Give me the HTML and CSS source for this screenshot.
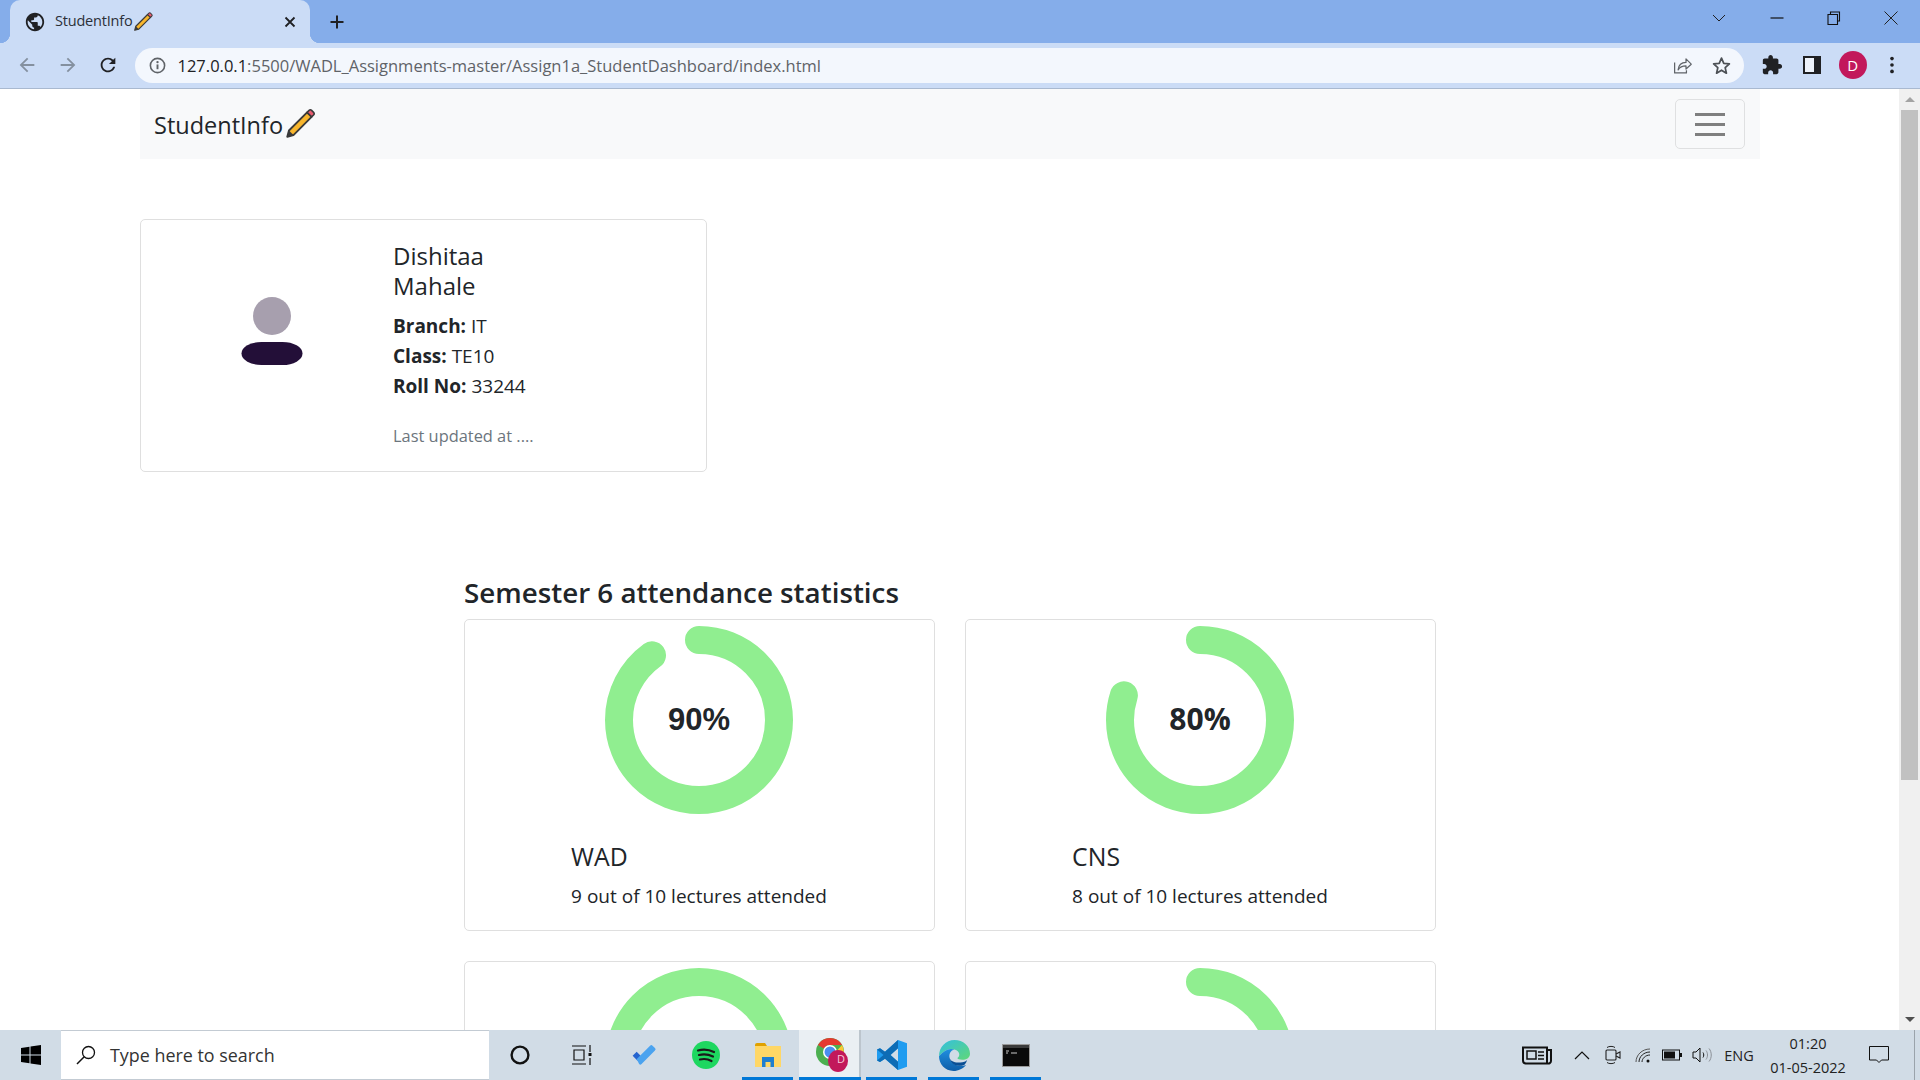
FILE: index.html
```html
<!DOCTYPE html>
<html>
<head>
    <title>StudentInfo</title>
    <link rel="stylesheet" href="styles.css">
</head>
<body>
    <svg class="defs" width="0" height="0">
        <symbol id="pencil" viewBox="0 0 24 24">
            <path d="M3 21l1.200-4.400L17 3.800l3.200 3.200L7.400 19.800z" fill="#f8b62d" stroke="#3a3a3a" stroke-width="1.300" stroke-linejoin="round"/>
            <path d="M17 3.800l1.400-1.400c.6-.6 1.200-.6 1.800 0l1.400 1.400c.6.6.6 1.200 0 1.800L20.200 7z" fill="#ea5b6f" stroke="#3a3a3a" stroke-width="1.100"/>
            <path d="M3 21l1.200-4.400 3.200 3.200z" fill="#3a3a3a"/>
        </symbol>
    </svg>

    <div class="tabstrip">
        <div class="tab">
            <svg class="tab-favicon" viewBox="0 0 24 24"><path d="M12 2C6.480 2 2 6.480 2 12s4.480 10 10 10 10-4.480 10-10S17.520 2 12 2zm-1 17.930c-3.950-.49-7-3.850-7-7.930 0-.62.08-1.210.21-1.790L9 15v1c0 1.100.9 2 2 2v1.930zm6.900-2.540c-.26-.81-1-1.390-1.900-1.390h-1v-3c0-.55-.45-1-1-1H8v-2h2c.55 0 1-.45 1-1V7h2c1.100 0 2-.9 2-2v-.41c2.930 1.190 5 4.060 5 7.410 0 2.080-.8 3.970-2.100 5.390z" fill="#202124"/></svg>
            <span class="tab-title">StudentInfo</span>
            <svg class="tab-pencil"><use href="#pencil"/></svg>
            <svg class="tab-close" viewBox="0 0 12 12"><path d="M1.500 1.500l9 9M10.500 1.500l-9 9" stroke="#202124" stroke-width="1.800" fill="none"/></svg>
        </div>
        <div class="new-tab">
            <svg viewBox="0 0 16 16"><path d="M8 1.500v13M1.500 8h13" stroke="#202124" stroke-width="2" fill="none"/></svg>
        </div>
        <div class="tab-list">
            <svg viewBox="0 0 14 8"><path d="M1 1l6 6 6-6" stroke="#202124" stroke-width="1" fill="none"/></svg>
        </div>
        <div class="win-btn">
            <svg viewBox="0 0 14 14"><path d="M0.500 7h13" stroke="#111" stroke-width="1.200" fill="none"/></svg>
        </div>
        <div class="win-btn">
            <svg viewBox="0 0 14 14"><path d="M3.500 3V1h9v9h-2M1 3.500h9.500v10H1z" stroke="#111" stroke-width="1.100" fill="none"/></svg>
        </div>
        <div class="win-btn">
            <svg viewBox="0 0 14 14"><path d="M0.500 0.500l13 13M13.500 0.500l-13 13" stroke="#222" stroke-width="1" fill="none"/></svg>
        </div>
    </div>

    <div class="toolbar">
        <div class="nav-btn">
            <svg viewBox="0 0 24 24"><path d="M20 11H7.830l5.590-5.590L12 4l-8 8 8 8 1.410-1.410L7.830 13H20v-2z" fill="#84909f"/></svg>
        </div>
        <div class="nav-btn">
            <svg viewBox="0 0 24 24"><path d="M12 4l-1.410 1.410L16.170 11H4v2h12.170l-5.580 5.590L12 20l8-8z" fill="#84909f"/></svg>
        </div>
        <div class="nav-btn">
            <svg viewBox="0 0 24 24"><path d="M17.650 6.350C16.200 4.900 14.210 4 12 4c-4.420 0-7.990 3.580-7.990 8s3.570 8 7.990 8c3.730 0 6.840-2.550 7.730-6h-2.080c-.82 2.330-3.040 4-5.650 4-3.310 0-6-2.690-6-6s2.690-6 6-6c1.660 0 3.140.69 4.220 1.780L13 11h7V4l-2.350 2.350z" fill="#202124"/></svg>
        </div>
        <div class="omnibox">
            <svg class="omni-info" viewBox="0 0 16 16">
                <circle cx="8" cy="8" r="6.700" fill="none" stroke="#5f6368" stroke-width="1.500"/>
                <path d="M8 7v4.500" stroke="#5f6368" stroke-width="1.800"/>
                <circle cx="8" cy="4.800" r="1.100" fill="#5f6368"/>
            </svg>
            <span class="omni-url"><span class="omni-host">127.0.0.1</span>:5500/WADL_Assignments-master/Assign1a_StudentDashboard/index.html</span>
            <svg class="omni-icon share" viewBox="0 0 24 24"><path d="M3 8.500v12h13.500v-3M7 17c.5-5 3.500-8.500 9-8.500V4.500l6 6-6 5.500v-3.500c-4 0-7 1-9 4.500z" fill="none" stroke="#5f6368" stroke-width="1.400" stroke-linejoin="round"/></svg>
            <svg class="omni-icon star" viewBox="0 0 24 24"><path d="M12 3.500l2.600 6 6.400.6-4.800 4.300 1.400 6.400-5.600-3.400-5.600 3.400 1.400-6.400L3 10.100l6.400-.6z" fill="none" stroke="#4d5156" stroke-width="2" stroke-linejoin="round"/></svg>
        </div>
        <div class="nav-btn">
            <svg viewBox="0 0 24 24"><path d="M20.500 11H19V7c0-1.100-.9-2-2-2h-4V3.500C13 2.120 11.880 1 10.500 1S8 2.120 8 3.500V5H4c-1.100 0-1.990.9-1.990 2v3.800H3.500c1.490 0 2.700 1.210 2.700 2.700s-1.210 2.700-2.700 2.700H2V20c0 1.100.9 2 2 2h3.800v-1.500c0-1.490 1.210-2.700 2.700-2.700 1.490 0 2.700 1.210 2.700 2.700V22H17c1.100 0 2-.9 2-2v-4h1.500c1.380 0 2.500-1.120 2.500-2.500S21.880 11 20.500 11z" fill="#202124"/></svg>
        </div>
        <div class="nav-btn">
            <svg class="panel-icon" viewBox="0 0 18 18"><rect x="0" y="0" width="18" height="18" fill="#202124"/><rect x="2" y="2" width="9" height="14" fill="#eef3fb"/></svg>
        </div>
        <div class="nav-btn"><span class="profile">D</span></div>
        <div class="nav-btn nav-btn-last">
            <svg viewBox="0 0 24 24"><circle cx="12" cy="5" r="2" fill="#202124"/><circle cx="12" cy="12" r="2" fill="#202124"/><circle cx="12" cy="19" r="2" fill="#202124"/></svg>
        </div>
    </div>

    <div class="viewport">
        <div class="page">
            <nav class="navbar">
                <div class="brand">
                    <span class="brand-name">StudentInfo</span>
                    <svg class="brand-pencil"><use href="#pencil"/></svg>
                </div>
                <button class="toggler">
                    <span class="toggler-bar"></span>
                    <span class="toggler-bar"></span>
                    <span class="toggler-bar"></span>
                </button>
            </nav>

            <section class="profile-card">
                <div class="profile-img">
                    <svg viewBox="0 0 62 68" width="62" height="68">
                        <circle cx="31" cy="19" r="19" fill="#a79fae"/>
                        <rect x="0.500" y="45" width="61" height="23" rx="20" ry="11.500" fill="#230f38"/>
                    </svg>
                </div>
                <div class="profile-body">
                    <h5 class="profile-name">Dishitaa<br>Mahale</h5>
                    <p class="profile-line"><b>Branch:</b> IT</p>
                    <p class="profile-line"><b>Class:</b> TE10</p>
                    <p class="profile-line"><b>Roll No:</b> 33244</p>
                    <p class="profile-updated">Last updated at ....</p>
                </div>
            </section>

            <section class="stats">
                <h3 class="stats-title">Semester 6 attendance statistics</h3>
                <div class="stats-grid">
                    <div class="stat-card">
                        <div class="ring">
                            <svg viewBox="0 0 188 188"><circle class="ring-arc" cx="94" cy="94" r="80" pathLength="100" stroke-dasharray="90 100"/></svg>
                            <span class="ring-value ring-value-plain">90%</span>
                        </div>
                        <div class="stat-text">
                            <h5 class="stat-name">WAD</h5>
                            <p class="stat-note">9 out of 10 lectures attended</p>
                        </div>
                    </div>
                    <div class="stat-card">
                        <div class="ring">
                            <svg viewBox="0 0 188 188"><circle class="ring-arc" cx="94" cy="94" r="80" pathLength="100" stroke-dasharray="80 100"/></svg>
                            <span class="ring-value">80%</span>
                        </div>
                        <div class="stat-text">
                            <h5 class="stat-name">CNS</h5>
                            <p class="stat-note">8 out of 10 lectures attended</p>
                        </div>
                    </div>
                    <div class="stat-card">
                        <div class="ring">
                            <svg viewBox="0 0 188 188"><circle class="ring-arc" cx="94" cy="94" r="80"/></svg>
                        </div>
                    </div>
                    <div class="stat-card">
                        <div class="ring">
                            <svg viewBox="0 0 188 188"><circle class="ring-arc" cx="94" cy="94" r="80" pathLength="100" stroke-dasharray="60 100"/></svg>
                        </div>
                    </div>
                </div>
            </section>
        </div>
        <div class="scrollbar">
            <div class="scroll-btn"><span class="arrow-up"></span></div>
            <div class="scroll-thumb"></div>
            <div class="scroll-rest"></div>
            <div class="scroll-btn"><span class="arrow-down"></span></div>
        </div>
    </div>

    <div class="taskbar">
        <div class="start">
            <svg viewBox="0 0 20 20"><path d="M0 3l8.500-1.200v7.700H0zM9.500 1.600L20 0v9.500H9.500zM0 10.500h8.500v7.700L0 17zM9.500 10.500H20V20L9.500 18.400z" fill="#000"/></svg>
        </div>
        <div class="search">
            <svg viewBox="0 0 20 20"><circle cx="12.500" cy="7.500" r="6" fill="none" stroke="#111" stroke-width="1.300"/><path d="M8.200 11.800L1 19" stroke="#111" stroke-width="1.500"/></svg>
            <span>Type here to search</span>
        </div>
        <div class="task task-small">
            <svg viewBox="0 0 20 20"><circle cx="10" cy="10" r="8.400" fill="none" stroke="#111" stroke-width="2.400"/></svg>
        </div>
        <div class="task task-small">
            <svg viewBox="0 0 20 20"><path d="M0 1h14M0 19h14M2 5h10v10H2zM18 0v7M18 13v7" fill="none" stroke="#111" stroke-width="1.200"/><rect x="16.500" y="8" width="3" height="3" fill="#111"/></svg>
        </div>
        <div class="task">
            <svg viewBox="0 0 32 26"><path d="M2 14l5-5 6 6-5 5z" fill="#2564cf"/><path d="M8 20l-1.500-1.500L23.500 1.500a2 2 0 0 1 3 0l3 3a2 2 0 0 1 0 3L13 24a2 2 0 0 1-3 0z" fill="#4ba3ef"/></svg>
        </div>
        <div class="task task-spotify">
            <svg viewBox="0 0 28 28"><circle cx="14" cy="14" r="14" fill="#1ed760"/><path d="M6 9.500c5-1.500 11-1 16 1.500M7 14c4.500-1.200 9.500-.7 14 1.500M8 18.500c4-1 8-.5 11.500 1.500" fill="none" stroke="#1a1a1a" stroke-width="2.200" stroke-linecap="round"/></svg>
        </div>
        <div class="task task-open task-folder">
            <svg viewBox="0 0 28 26"><path d="M1 3a2 2 0 0 1 2-2h8l2 3H1z" fill="#e0a100"/><rect x="1" y="4" width="26" height="21" fill="#ffd766"/><path d="M8 25V15h12v10h-3.500v-5h-5v5z" fill="#1f7fd0"/></svg>
        </div>
        <div class="task task-active">
            <svg viewBox="0 0 32 36">
                <circle cx="14" cy="15" r="14" fill="#4caf50"/>
                <path d="M14 1a14 14 0 0 1 12.100 7H14a7 7 0 0 0-6.100 3.500L2 8A14 14 0 0 1 14 1z" fill="#e5392f"/>
                <path d="M26.100 8A14 14 0 0 1 20 27l-3-9 9-10z" fill="#fcc934"/>
                <circle cx="14" cy="15" r="7" fill="#fff"/><circle cx="14" cy="15" r="5.500" fill="#4a8df0"/>
                <ellipse cx="22" cy="24" rx="10" ry="11" fill="#c2185b"/>
            </svg>
            <span class="task-badge">D</span>
        </div>
        <div class="task task-open task-code">
            <svg viewBox="0 0 30 36" preserveAspectRatio="none"><path d="M21 0l9 4v28l-9 4-13-13.500-5 4L0 24.500V11.500L3 10l5 4zM21 10l-7.500 8 7.500 8z" fill="#1f9cf0"/><path d="M21 0l-13 14-5-4-3 1.500L6.500 18 0 24.500 3 26.500l5-4L21 36V26l-7.500-8L21 10z" fill="#0d6cb5"/></svg>
        </div>
        <div class="task task-open task-edge">
            <svg viewBox="0 0 32 36" preserveAspectRatio="none">
                <defs>
                    <linearGradient id="edge-top" x1="0" y1="0" x2="1" y2="1"><stop offset="0" stop-color="#33bfe0"/><stop offset="1" stop-color="#5fd877"/></linearGradient>
                    <linearGradient id="edge-low" x1="0" y1="0" x2="0" y2="1"><stop offset="0" stop-color="#1f8fe0"/><stop offset="1" stop-color="#0f5ea8"/></linearGradient>
                </defs>
                <path d="M16 0C25 0 32 7 32 16c0 5-4 7-8 7-3 0-5-1-5-2 3-2 3-8-3-10C10 9 5 12 0 19 0 8 7 0 16 0z" fill="url(#edge-top)"/>
                <path d="M0 19C5 12 10 9 16 11c-4 1-6 5-5 10 1 7 9 11 17 8-3 4-8 7-13 7C6 36 0 28 0 19z" fill="url(#edge-low)"/>
                <path d="M11 21c1 4 6 6 11 5 3 0 6-1 7-3-1 4-2 5-3 6-8 3-14-1-15-8z" fill="#0b4f94"/>
            </svg>
        </div>
        <div class="task task-open task-term">
            <svg viewBox="0 0 28 23"><rect x="0.500" y="0.500" width="27" height="22" fill="#0a0a0a" stroke="#9a9a9a"/><rect x="1" y="1" width="26" height="3" fill="#3b3b3b"/><path d="M4 7h3M4 9h2M9 9h6" stroke="#c8c8c8" stroke-width="1"/></svg>
        </div>

        <div class="tray">
            <div class="tray-item tray-news">
                <svg viewBox="0 0 30 20"><path d="M1 2.500h24v16H4a3 3 0 0 1-3-3zM25 5h4v11a2.500 2.500 0 0 1-4 2" fill="none" stroke="#111" stroke-width="2"/><rect x="5" y="6" width="9" height="8" fill="none" stroke="#111" stroke-width="1.500"/><path d="M16 7h6M16 10.500h6M16 14h6" stroke="#111" stroke-width="1.500"/></svg>
            </div>
            <div class="tray-item tray-chevron">
                <svg viewBox="0 0 16 10"><path d="M1 9l7-7 7 7" fill="none" stroke="#111" stroke-width="1.200"/></svg>
            </div>
            <div class="tray-item tray-meet">
                <svg viewBox="0 0 16 20"><rect x="1" y="5" width="10" height="10" rx="1" fill="none" stroke="#222" stroke-width="1.100"/><path d="M11 9l4-2v6l-4-2" fill="none" stroke="#222" stroke-width="1.100"/><path d="M2 2.500c2-1.500 6-1.500 8 0M2 17.500c2 1.500 6 1.500 8 0" fill="none" stroke="#222"/></svg>
            </div>
            <div class="tray-item tray-wifi">
                <svg viewBox="0 0 16 16"><path d="M1 15C1 8 7 2 15 2" fill="none" stroke="#555" stroke-width="1"/><path d="M4 15c0-5.500 5-10 11-10M7 15c0-3.500 3.500-7 8-7" fill="none" stroke="#222" stroke-width="1"/><circle cx="13" cy="14" r="1.500" fill="#111"/></svg>
            </div>
            <div class="tray-item tray-battery">
                <svg viewBox="0 0 20 12"><rect x="0.500" y="1" width="17" height="10" fill="none" stroke="#111"/><rect x="2" y="2.500" width="11" height="7" fill="#111"/><rect x="18" y="4" width="2" height="4" fill="#111"/></svg>
            </div>
            <div class="tray-item tray-sound">
                <svg viewBox="0 0 20 16"><path d="M1 5h3l4-4v14l-4-4H1z" fill="none" stroke="#111"/><path d="M11 5.500c1 1.500 1 3.500 0 5" fill="none" stroke="#111"/><path d="M14 3.500c2 2.500 2 6.500 0 9M17 1.500c3 3.500 3 9.500 0 13" fill="none" stroke="#8a8f96"/></svg>
            </div>
            <div class="tray-item tray-lang">ENG</div>
            <div class="tray-clock">
                <span>01:20</span>
                <span>01-05-2022</span>
            </div>
            <div class="tray-item tray-notify">
                <svg viewBox="0 0 20 20"><path d="M0.500 1.500h19v13.500H12.500L10 17.500 7.500 15H0.500z" fill="none" stroke="#111"/></svg>
            </div>
            <div class="show-desktop"></div>
        </div>
    </div>
</body>
</html>
```

FILE: styles.css
```css
:root {
    --strip-blue: #85adea;
    --toolbar-blue: #cbdcf6;
    --task-grey: #d1dce6;
    --task-line: #0078d7;
    --text-dark: #212529;
    --card-line: #dfdfdf;
    --ring-green: #90ee90;
}

* {
    box-sizing: border-box;
}

html, body {
    margin: 0;
    height: 100%;
    overflow: hidden;
}

body {
    display: flex;
    flex-direction: column;
    height: 1080px;
    font-family: "Open Sans", "Noto Sans", sans-serif;
    color: var(--text-dark);
    background: #fff;
}

.defs {
    position: absolute;
}

/* browser chrome */

.tabstrip {
    height: 43px;
    flex: none;
    display: flex;
    align-items: center;
    padding: 0 1px 0 10px;
    background: var(--strip-blue);
}

.tab {
    position: relative;
    width: 300px;
    height: 43px;
    display: flex;
    align-items: center;
    padding-left: 14px;
    background: var(--toolbar-blue);
    border-radius: 10px 10px 0 0;
}

.tab::before,
.tab::after {
    content: "";
    position: absolute;
    bottom: 0;
    width: 10px;
    height: 10px;
}

.tab::before {
    left: -10px;
    background: radial-gradient(circle at 0 0, transparent 10px, var(--toolbar-blue) 10.500px);
}

.tab::after {
    right: -10px;
    background: radial-gradient(circle at 100% 0, transparent 10px, var(--toolbar-blue) 10.500px);
}

.tab-favicon {
    width: 22px;
    height: 22px;
    flex: none;
}

.tab-title {
    margin: 0 0 2px 9px;
    font-size: 14.500px;
    color: #2b3038;
    letter-spacing: -0.2px;
}

.tab-pencil {
    width: 22px;
    height: 22px;
}

.tab-close {
    width: 12px;
    height: 12px;
    margin-left: auto;
    margin-right: 14px;
}

.new-tab {
    width: 54px;
    display: flex;
    justify-content: center;
}

.new-tab svg {
    width: 16px;
    height: 16px;
}

.tab-list {
    margin-left: auto;
    margin-right: 22px;
    width: 14px;
    display: flex;
    margin-top: -7px;
}

.tab-list svg {
    width: 14px;
    height: 8px;
}

.win-btn {
    width: 57px;
    display: flex;
    justify-content: center;
    margin-top: -7px;
}

.win-btn svg {
    width: 14px;
    height: 14px;
}

.toolbar {
    height: 46px;
    flex: none;
    display: flex;
    align-items: center;
    padding: 0 9px 1px 7px;
    background: var(--toolbar-blue);
    border-bottom: 1px solid #a9b9d0;
}

.nav-btn {
    width: 40.500px;
    height: 35px;
    flex: none;
    display: flex;
    align-items: center;
    justify-content: center;
}

.nav-btn-last {
    width: 38px;
}

.nav-btn svg {
    width: 22px;
    height: 22px;
}

.nav-btn .panel-icon {
    width: 18px;
    height: 18px;
}

.profile {
    width: 28px;
    height: 28px;
    border-radius: 50%;
    display: flex;
    align-items: center;
    justify-content: center;
    background: #c2185b;
    color: #fff;
    font-size: 15px;
}

.omnibox {
    flex: 1;
    height: 35px;
    margin: 0 8px 0 6px;
    display: flex;
    align-items: center;
    padding: 0 12px 0 14px;
    background: #f3f7fd;
    border-radius: 18px;
}

.omni-info {
    width: 17px;
    height: 17px;
    flex: none;
}

.omni-url {
    margin-left: 12px;
    font-size: 16.500px;
    color: #5f6368;
    white-space: nowrap;
}

.omni-host {
    color: #202124;
}

.omni-icon {
    width: 21px;
    height: 21px;
    flex: none;
}

.share {
    margin-left: auto;
}

.star {
    margin-left: 18px;
}

/* page */

.viewport {
    flex: 1;
    min-height: 0;
    display: flex;
}

.page {
    flex: 1;
    min-width: 0;
    overflow: hidden;
}

.navbar {
    width: 1620px;
    height: 70px;
    margin-left: 140px;
    display: flex;
    align-items: center;
    justify-content: space-between;
    padding: 0 15px 0 14px;
    background: #f8f9fa;
}

.brand {
    display: flex;
    align-items: center;
    font-size: 23.500px;
}

.brand-name {
    margin-top: 2px;
}

.brand-pencil {
    width: 34px;
    height: 34px;
}

.toggler {
    width: 70px;
    height: 50px;
    display: flex;
    flex-direction: column;
    align-items: center;
    justify-content: center;
    gap: 7px;
    background: transparent;
    border: 1px solid #dfe0e1;
    border-radius: 5px;
    padding: 0;
}

.toggler-bar {
    width: 30px;
    height: 3px;
    background: #7f7f7f;
}

.profile-card {
    width: 567px;
    height: 253px;
    margin: 60px 0 0 140px;
    display: flex;
    background: #fff;
    border: 1px solid var(--card-line);
    border-radius: 5px;
}

.profile-img {
    width: 252px;
    flex: none;
    display: flex;
    align-items: center;
    justify-content: center;
    padding: 0 0 29px 10px;
}

.profile-body {
    padding-top: 21px;
}

.profile-name {
    margin: 0 0 10px;
    font-size: 24px;
    font-weight: 500;
    line-height: 30px;
}

.profile-line {
    margin: 0;
    font-size: 19px;
    line-height: 30px;
}

.profile-updated {
    margin: 20px 0 0;
    font-size: 16.400px;
    line-height: 30px;
    color: #6c757d;
}

.stats {
    width: 972px;
    margin: 102px 0 0 464px;
}

.stats-title {
    margin: 0 0 9px;
    font-size: 27.750px;
    font-weight: 600;
    line-height: 36px;
}

.stats-grid {
    display: grid;
    grid-template-columns: 471px 471px;
    grid-auto-rows: 312px;
    gap: 30px;
}

.stat-card {
    display: flex;
    flex-direction: column;
    align-items: center;
    padding: 6px 1px 0 0;
    background: #fff;
    border: 1px solid var(--card-line);
    border-radius: 5px;
}

.ring {
    position: relative;
    width: 188px;
    height: 188px;
    flex: none;
    display: flex;
    align-items: center;
    justify-content: center;
}

.ring svg {
    position: absolute;
    inset: 0;
    transform: rotate(-90deg);
}

.ring-arc {
    fill: none;
    stroke: var(--ring-green);
    stroke-width: 28;
    stroke-linecap: round;
}

.ring-value {
    position: relative;
    margin-bottom: 4px;
    font-size: 30px;
    font-weight: 700;
}

.ring-value-plain {
    margin-bottom: 1px;
    font-family: "Liberation Sans", sans-serif;
    font-size: 31px;
}

.stat-text {
    margin-top: 27px;
}

.stat-name {
    margin: 0 0 10px;
    font-size: 24.800px;
    font-weight: 500;
    line-height: 30px;
}

.stat-note {
    margin: 0;
    font-size: 19px;
    line-height: 30px;
}

.scrollbar {
    width: 21px;
    flex: none;
    display: flex;
    flex-direction: column;
    background: #f0f0f0;
}

.scroll-btn {
    height: 21px;
    flex: none;
    display: flex;
    align-items: center;
    justify-content: center;
}

.arrow-up,
.arrow-down {
    width: 0;
    height: 0;
    border-left: 5px solid transparent;
    border-right: 5px solid transparent;
}

.arrow-up {
    border-bottom: 5px solid #a3a3a3;
}

.arrow-down {
    border-top: 5px solid #505050;
}

.scroll-thumb {
    height: 670px;
    margin: 0 2px;
    flex: none;
    background: #c1c1c1;
}

.scroll-rest {
    flex: 1;
}

/* taskbar */

.taskbar {
    height: 50px;
    flex: none;
    display: flex;
    background: var(--task-grey);
}

.start {
    width: 61px;
    flex: none;
    display: flex;
    align-items: center;
    justify-content: center;
}

.start svg {
    width: 20px;
    height: 20px;
}

.search {
    width: 428px;
    flex: none;
    display: flex;
    align-items: center;
    padding-left: 15px;
    background: #fff;
    border: 1px solid #c3cbd3;
    border-width: 1px 0;
}

.search svg {
    width: 20px;
    height: 20px;
    flex: none;
}

.search span {
    margin-left: 14px;
    font-size: 17.900px;
    color: #333;
}

.task {
    position: relative;
    width: 62px;
    flex: none;
    display: flex;
    align-items: center;
    justify-content: center;
}

.task svg {
    width: 26px;
    height: 28px;
}

.task-small svg {
    width: 20px;
    height: 20px;
}

.task-spotify svg {
    width: 28px;
    height: 28px;
}

.task-folder svg {
    width: 28px;
    height: 26px;
}

.task-code svg {
    width: 30px;
    height: 30px;
}

.task-edge svg {
    width: 31px;
    height: 31px;
}

.task-term svg {
    width: 28px;
    height: 23px;
}

.task-open::after,
.task-active::after {
    content: "";
    position: absolute;
    bottom: 0;
    height: 3px;
    background: var(--task-line);
}

.task-open::after {
    left: 5px;
    right: 6px;
}

.task-active {
    background: #eaeff3;
    border-right: 2px solid #bcc5cd;
}

.task-active svg {
    width: 32px;
    height: 36px;
    margin-left: 5px;
}

.task-active::after {
    left: 0;
    right: -2px;
}

.task-badge {
    position: absolute;
    left: 38px;
    top: 21px;
    font-size: 11px;
    color: #f7c9dc;
}

.tray {
    margin-left: auto;
    display: flex;
    align-items: center;
}

.tray-item {
    height: 50px;
    flex: none;
    display: flex;
    align-items: center;
    justify-content: center;
}

.tray-news { width: 60px; }
.tray-news svg { width: 30px; height: 20px; }
.tray-chevron { width: 30px; }
.tray-chevron svg { width: 16px; height: 10px; }
.tray-meet { width: 31px; }
.tray-meet svg { width: 16px; height: 20px; }
.tray-wifi { width: 29px; }
.tray-wifi svg { width: 16px; height: 16px; }
.tray-battery { width: 30px; }
.tray-battery svg { width: 20px; height: 12px; }
.tray-sound { width: 30px; }
.tray-sound svg { width: 20px; height: 16px; }
.tray-notify { width: 48px; }
.tray-notify svg { width: 20px; height: 20px; }

.tray-lang {
    width: 44px;
    font-size: 14.500px;
    color: #222;
}

.tray-clock {
    width: 94px;
    flex: none;
    display: flex;
    flex-direction: column;
    align-items: center;
    gap: 3px;
    font-size: 14.500px;
    line-height: 21px;
    color: #222;
}

.show-desktop {
    width: 17px;
    height: 50px;
    flex: none;
    background: linear-gradient(to right, transparent 11px, #9aa3ab 11px, #9aa3ab 12px, transparent 12px);
}
```
